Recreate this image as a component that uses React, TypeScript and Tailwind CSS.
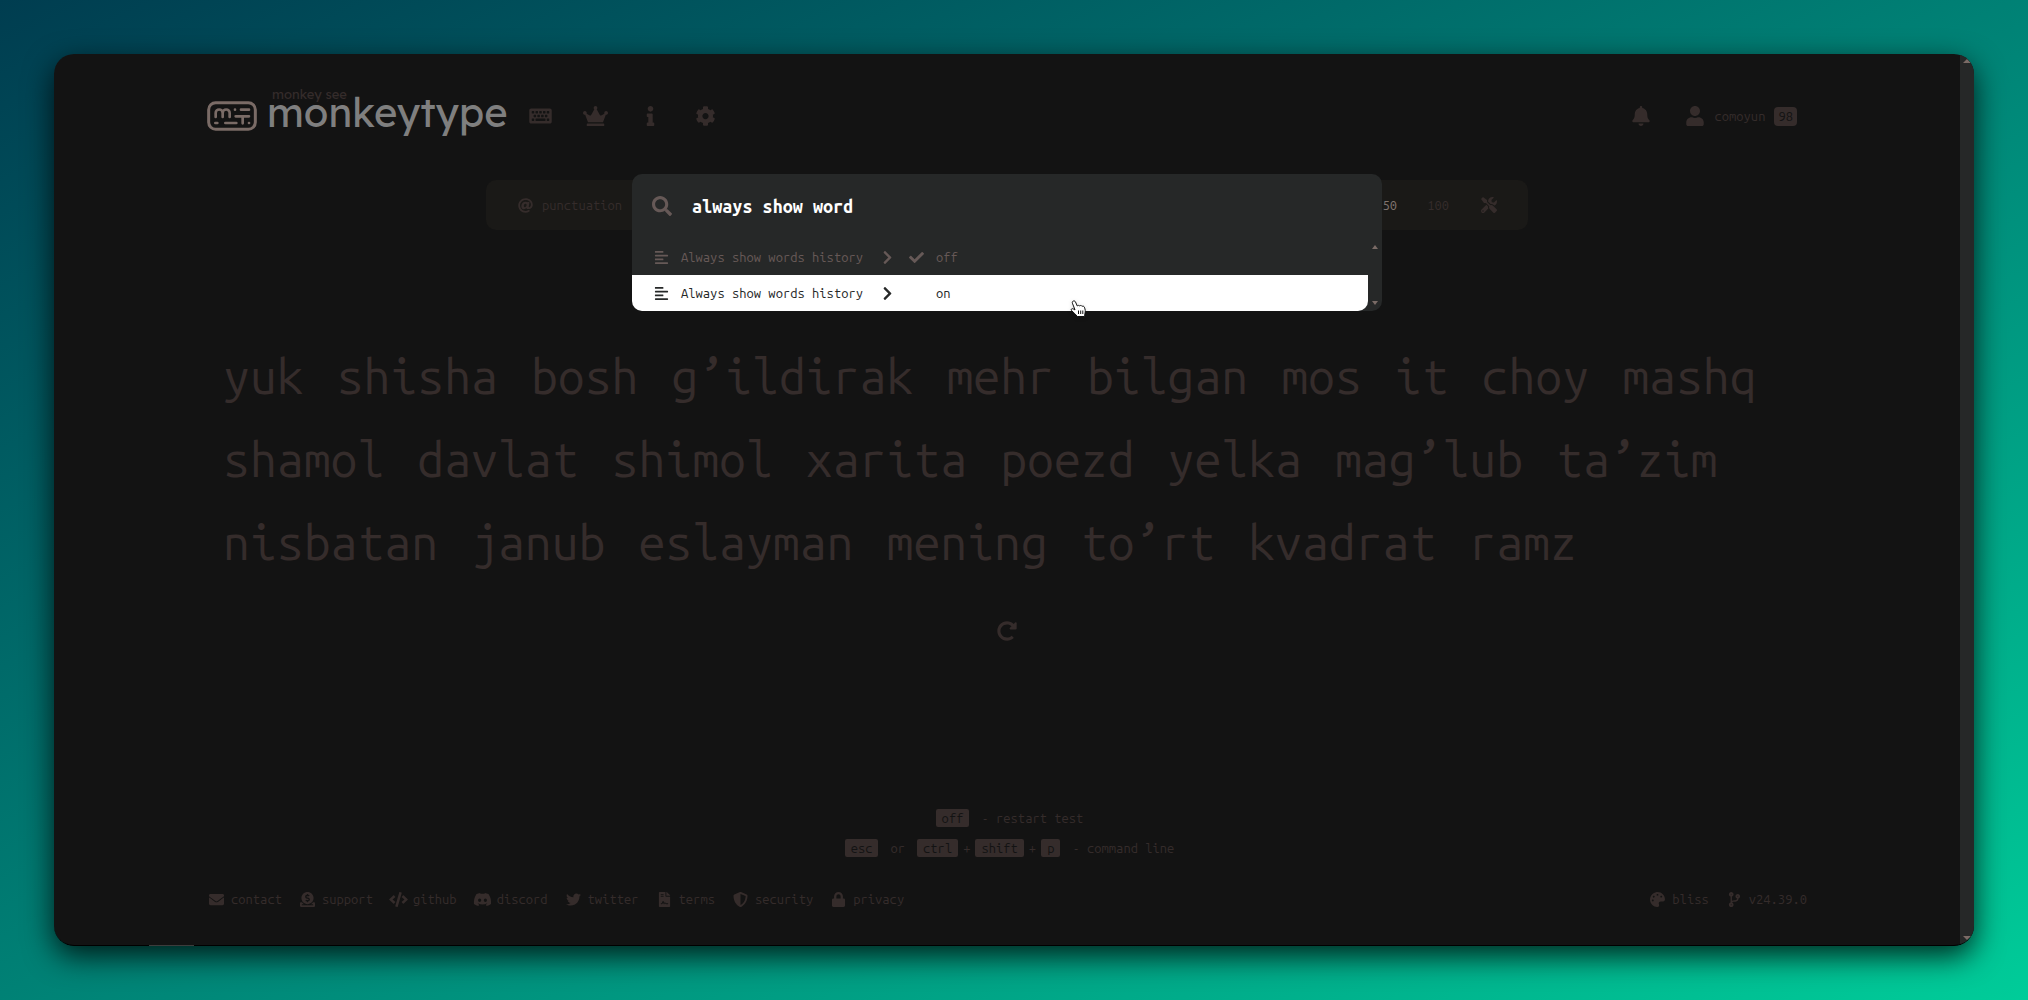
import React from "react";
import type { IconType } from "react-icons";
import {
  FaAlignLeft, FaAt, FaBell, FaCheck, FaChevronRight, FaCode, FaCodeBranch, FaCog, FaCrown,
  FaDiscord, FaDonate, FaEnvelope, FaFileContract, FaInfo, FaKeyboard, FaLock, FaPalette,
  FaRedoAlt, FaSearch, FaShieldAlt, FaTools, FaTwitter, FaUser,
} from "react-icons/fa";

const lines = [
  "yuk shisha bosh g’ildirak mehr bilgan mos it choy mashq",
  "shamol davlat shimol xarita poezd yelka mag’lub ta’zim",
  "nisbatan janub eslayman mening to’rt kvadrat ramz",
];

const nav: { label: string; Icon: IconType }[] = [
  { label: "Start test", Icon: FaKeyboard },
  { label: "Leaderboards", Icon: FaCrown },
  { label: "About", Icon: FaInfo },
  { label: "Settings", Icon: FaCog },
];

const links: { label: string; Icon: IconType }[] = [
  { label: "contact", Icon: FaEnvelope },
  { label: "support", Icon: FaDonate },
  { label: "github", Icon: FaCode },
  { label: "discord", Icon: FaDiscord },
  { label: "twitter", Icon: FaTwitter },
  { label: "terms", Icon: FaFileContract },
  { label: "security", Icon: FaShieldAlt },
  { label: "privacy", Icon: FaLock },
];

function Logo() {
  return (
    <svg viewBox="20 20 150 90" className="h-[30px] w-[50px]" fill="none" stroke="#7a6b66" strokeWidth="9" strokeLinecap="round" strokeLinejoin="round" aria-hidden="true">
      <rect x="25" y="25" width="140" height="80" rx="21" />
      <path d="M46 68V56a10.500 10.500 0 0 1 21 0V68M67 56a10.500 10.500 0 0 1 21 0V68" strokeWidth="8" />
      <path d="M104 46h.1M122 46H146M106 66H146M127 66V87M146 86h.1M45 86H51M75 86H108" strokeWidth="8" />
    </svg>
  );
}

function HandCursor() {
  return (
    <svg viewBox="0 0 17 18" className="pointer-events-none absolute left-[438px] top-[126px] z-10 h-[18px] w-[17px] drop-shadow-sm" aria-hidden="true">
      <path d="M3 1.200C4 .6 5 .9 5.500 2L7.300 6C8 5.200 9 5.200 9.700 5.900C10.400 5.200 11.500 5.400 12.100 6.300C13 5.900 14 6.200 14.400 7.200C15.300 9.600 15.600 11.500 14.900 13.500L14.600 16.500H7.200C6 14.500 3.500 12.500 1.500 10.500C.6 9.400 1.800 8.100 3.200 8.900L5 9.900L2.400 3.200C2.100 2.300 2.300 1.600 3 1.200Z" fill="white" stroke="#111" strokeWidth="1" />
      <path d="M8.500 10.500V14M10.700 10.500V14M12.800 10.500V14" stroke="#111" strokeWidth="1" />
    </svg>
  );
}

function Key({ children }: { children: React.ReactNode }) {
  return <kbd className="rounded-xs bg-[#352c2b] px-1.5 leading-[18px] text-[#131313] font-[inherit]">{children}</kbd>;
}

function FooterIcon({ Icon }: { Icon: IconType }) {
  return <Icon className="h-[15px] w-[19px] shrink-0" />;
}

function Command({ value, active }: { value: string; active?: boolean }) {
  return (
    <button className={`flex h-9 w-full items-center pl-[22px] text-left whitespace-nowrap ${active ? "rounded-b-[10px] bg-white text-[#262828]" : "text-[#665957]"}`}>
      <FaAlignLeft className="mr-3 size-[15px]" />
      <span className="w-[189px]">Always show words history</span>
      <FaChevronRight className="ml-[10px] size-[15px]" />
      <span className="ml-3.5 w-[27px]">{!active && <FaCheck className="size-[15px]" />}</span>
      <span>{value}</span>
    </button>
  );
}

export default function App() {
  return (
    <div className="flex min-h-screen bg-linear-to-br from-[#003d50] to-[#00cc99] p-[54px] text-[13px] leading-5 [font-family:'Ubuntu_Mono','DejaVu_Sans_Mono',monospace]">
      <div className="relative flex w-full rounded-[20px] shadow-[0_10px_30px_rgba(0,0,0,0.8)]">
        <div className="flex w-full overflow-hidden rounded-[20px] border-b border-black bg-[#131313]">
          <div className="flex flex-1 flex-col text-[#352c2b]">
            <div className="mx-auto flex w-full max-w-[1600px] flex-1 flex-col pt-[35px] pb-9">
              <header className="flex h-[54px] items-center pr-[10px]">
                <a href="#home" className="flex items-center gap-[10px]">
                  <Logo />
                  <span className="relative pb-2 [font-family:'Lexend_Deca','Inter',sans-serif]">
                    <span className="absolute -top-1 left-[5px] text-[13px] leading-4 whitespace-nowrap">monkey see</span>
                    <span className="block text-[40px] leading-[44px] text-[#7f7f7f]">monkeytype</span>
                  </span>
                </a>
                <nav className="ml-[5px] flex">
                  {nav.map(({ label, Icon }) => (
                    <button key={label} aria-label={label} className="flex w-[55px] justify-center">
                      <Icon className="h-5 w-[25px]" />
                    </button>
                  ))}
                </nav>
                <div className="ml-auto flex items-center">
                  <button aria-label="Notifications"><FaBell className="h-5 w-[18px]" /></button>
                  <a href="#account" className="ml-9 flex items-center">
                    <FaUser className="h-5 w-[18px]" />
                    <span className="ml-[10px]">comoyun</span>
                    <span className="ml-[9px] rounded bg-[#352c2b] px-1 leading-[19px] text-[#131313]">98</span>
                  </a>
                </div>
              </header>

              <div className="mx-auto mt-[37px] flex h-[50px] w-[1042px] max-w-full items-center justify-between rounded-[10px] bg-[#1a1917] pr-[31px] pl-8">
                <button className="flex items-center gap-[9px]"><FaAt className="size-[15px]" />punctuation</button>
                <div className="flex items-center">
                  <button className="text-[#80746f]">50</button>
                  <button className="ml-[30px]">100</button>
                  <button aria-label="Custom length" className="ml-8"><FaTools className="size-4" /></button>
                </div>
              </div>

              <main className="mt-[105px] flex flex-col items-center">
                <div className="w-full px-4 text-[48px] leading-[83px]">
                  {lines.map((line) => (
                    <div key={line} className="flex flex-wrap gap-x-[33px]">
                      {line.split(" ").map((word) => <span key={word}>{word}</span>)}
                    </div>
                  ))}
                </div>
                <button aria-label="Restart test" className="mt-[37px]"><FaRedoAlt className="size-5" /></button>
              </main>

              <div className="mt-auto flex flex-col items-center gap-3 pl-[5px] leading-[18px]">
                <div className="flex"><Key>off</Key><span className="ml-3">- restart test</span></div>
                <div className="flex">
                  <Key>esc</Key><span className="mx-3">or</span>
                  <Key>ctrl</Key><span className="mx-[5px]">+</span><Key>shift</Key><span className="mx-[5px]">+</span><Key>p</Key>
                  <span className="ml-3">- command line</span>
                </div>
              </div>

              <footer className="mt-8 flex items-center justify-between">
                <div className="flex gap-4">
                  {links.map(({ label, Icon }) => (
                    <a key={label} href={`#${label}`} className="flex items-center gap-[5px]"><FooterIcon Icon={Icon} />{label}</a>
                  ))}
                </div>
                <div className="flex gap-4">
                  <button className="flex items-center gap-[5px]"><FooterIcon Icon={FaPalette} />bliss</button>
                  <button className="flex items-center gap-[5px]"><FooterIcon Icon={FaCodeBranch} />v24.39.0</button>
                </div>
              </footer>
            </div>
          </div>
          <div className="flex w-[14px] flex-col items-center justify-between bg-[#262828] py-[5px]" aria-hidden="true">
            <span className="border-x-4 border-b-4 border-x-transparent border-b-[#7a6b66]" />
            <span className="border-x-4 border-t-4 border-x-transparent border-t-[#7a6b66]" />
          </div>
        </div>

        <span className="absolute bottom-0 left-[95px] h-px w-[45px] bg-[#3c3c3c]" />

        <div role="dialog" aria-label="Command line" className="absolute inset-x-0 top-[120px] mr-[14px] flex justify-center">
          <div className="relative w-[750px] max-w-full rounded-[10px] bg-[#262828]">
            <label className="flex h-16 items-center pl-5">
              <FaSearch className="size-5 text-[#665957]" />
              <input aria-label="Search commands" defaultValue="always show word" className="ml-5 flex-1 bg-transparent text-[18px] font-bold text-white outline-none" />
            </label>
            <div className="flex pt-px">
              <div className="flex-1">
                <Command value="off" />
                <Command value="on" active />
              </div>
              <div className="flex w-[14px] flex-col items-center justify-between py-1.5" aria-hidden="true">
                <span className="border-x-[3px] border-b-4 border-x-transparent border-b-[#7a6b66]" />
                <span className="border-x-[3px] border-t-4 border-x-transparent border-t-[#7a6b66]" />
              </div>
            </div>
            <HandCursor />
          </div>
        </div>
      </div>
    </div>
  );
}
